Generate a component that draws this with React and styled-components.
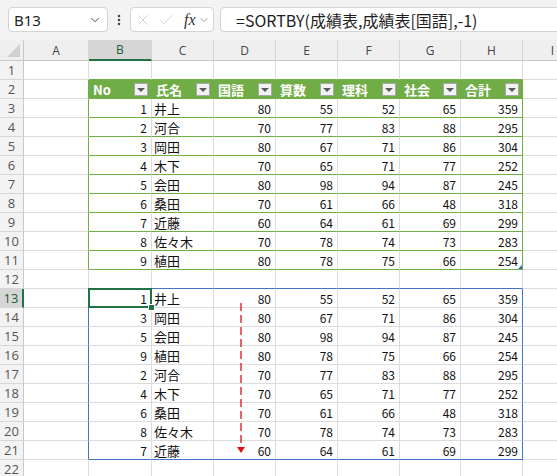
import React from 'react';
import styled, { createGlobalStyle, css } from 'styled-components';
import { ChevronDown, X, Check, EllipsisVertical } from 'lucide-react';

const GREEN = '#70ad47';
const GRID = '#dcdcdc';
const BLUE = '#4472c4';
const SEL = '#217346';

const Global = createGlobalStyle`
  html, body { margin: 0; padding: 0; background: #fff; overflow: hidden; }
  body { font-family: "Noto Sans CJK JP", "Noto Sans", sans-serif; }
`;

const Page = styled.div`
  width: 557px;
  height: 476px;
  overflow: hidden;
  display: flex;
  flex-direction: column;
`;

const FormulaBar = styled.div`
  height: 40px;
  flex: none;
  box-sizing: border-box;
  background: #f3f3f3;
  display: flex;
  align-items: flex-start;
  padding: 7px 0 0 8px;
`;

const NameBox = styled.div`
  width: 100px;
  height: 25px;
  flex: none;
  box-sizing: border-box;
  background: #fff;
  border: 1px solid #d4d4d4;
  border-radius: 4px;
  display: flex;
  align-items: center;
  justify-content: space-between;
  padding: 0 5px 0 5px;
  font-family: "Noto Sans", sans-serif;
  font-size: 15px;
  color: #1e1e1e;
`;

const Dots = styled.div`
  width: 22px;
  height: 25px;
  flex: none;
  display: flex;
  align-items: center;
  justify-content: center;
  color: #444;
`;

const FxBox = styled.div`
  width: 84px;
  height: 25px;
  flex: none;
  box-sizing: border-box;
  background: #fff;
  border: 1px solid #d4d4d4;
  border-radius: 4px;
  display: flex;
  align-items: center;
  padding: 0 2px 0 3px;
  gap: 5px;
  color: #c4c4c4;
`;

const FxLabel = styled.span`
  font-family: "Liberation Serif", serif;
  font-style: italic;
  font-size: 16px;
  color: #333;
  margin-left: 4px;
  margin-right: -3px;
`;

const FormulaInput = styled.div`
  flex: none;
  width: 360px;
  height: 25px;
  margin-left: 6px;
  box-sizing: border-box;
  background: #fff;
  border: 1px solid #d4d4d4;
  border-radius: 4px;
  display: flex;
  align-items: center;
  padding-left: 15px;
  font-size: 16px;
  color: #1e1e1e;
  white-space: nowrap;
`;

const Sheet = styled.div`
  position: relative;
  display: grid;
  grid-template-columns: 24px 65px 63px 62px 62px 62px 62px 61px 62px 60px;
  grid-template-rows: 21px;
  grid-auto-rows: 19px;
  width: 583px;
`;

const Corner = styled.div`
  position: relative;
  box-sizing: border-box;
  background: #efefef;
  border-right: 1px solid #c8c8c8;
  border-bottom: 1px solid #c8c8c8;
  &::after {
    content: '';
    position: absolute;
    right: 3px;
    bottom: 3px;
    border-left: 13px solid transparent;
    border-bottom: 13px solid #d0d0d0;
  }
`;

const ColHead = styled.div`
  box-sizing: border-box;
  display: flex;
  align-items: center;
  justify-content: center;
  background: ${p => (p.$sel ? '#d6d6d6' : '#efefef')};
  border-right: 1px solid #d6d6d6;
  border-bottom: ${p => (p.$sel ? `2px solid ${SEL}` : '1px solid #c8c8c8')};
  font-family: "Open Sans", sans-serif;
  font-size: 12px;
  color: ${p => (p.$sel ? '#1d5b3a' : '#444')};
`;

const RowHead = styled.div`
  box-sizing: border-box;
  display: flex;
  align-items: center;
  justify-content: center;
  background: ${p => (p.$sel ? '#d6d6d6' : '#f3f3f3')};
  border-right: ${p => (p.$sel ? `2px solid ${SEL}` : '1px solid #c8c8c8')};
  border-bottom: 1px solid #d6d6d6;
  font-family: "Open Sans", sans-serif;
  font-size: 13px;
  color: ${p => (p.$sel ? '#1d5b3a' : '#555')};
`;

const Cell = styled.div`
  position: relative;
  box-sizing: border-box;
  display: flex;
  align-items: center;
  justify-content: ${p => (p.$right ? 'flex-end' : 'flex-start')};
  padding: 0 4px 0 2px;
  border-right: 1px solid ${p => p.$br};
  border-bottom: 1px solid ${p => p.$bb};
  font-size: ${p => (p.$num ? '12px' : '13px')};
  color: #111;
  white-space: nowrap;
  ${p =>
    p.$selected &&
    css`
      &::after {
        content: '';
        position: absolute;
        left: -1px;
        top: -1px;
        right: -1px;
        bottom: -1px;
        border: 2px solid ${SEL};
        z-index: 2;
        pointer-events: none;
      }
      &::before {
        content: '';
        position: absolute;
        right: -4px;
        bottom: -4px;
        width: 5px;
        height: 5px;
        background: ${SEL};
        border: 1px solid #fff;
        z-index: 3;
      }
    `}
  ${p =>
    p.$resize &&
    css`
      &::after {
        content: '';
        position: absolute;
        right: 0;
        bottom: 0;
        border-left: 4px solid transparent;
        border-bottom: 4px solid #3a66b0;
      }
    `}
`;

const HeaderCell = styled.div`
  box-sizing: border-box;
  display: flex;
  align-items: center;
  justify-content: space-between;
  padding: 0 3px 0 4px;
  background: ${GREEN};
  border-right: 1px solid ${GREEN};
  border-bottom: 1px solid ${GREEN};
  color: #fff;
  font-weight: 700;
  font-size: 13px;
  white-space: nowrap;
`;

const FilterBtn = styled.span`
  width: 14px;
  height: 13px;
  box-sizing: border-box;
  flex: none;
  background: #f2f2f2;
  border: 1px solid #a8a8a8;
  display: flex;
  align-items: center;
  justify-content: center;
  &::before {
    content: '';
    border-left: 4px solid transparent;
    border-right: 4px solid transparent;
    border-top: 4px solid #595959;
    margin-top: 1px;
  }
`;

const ArrowLayer = styled.svg`
  position: absolute;
  left: 236px;
  top: 263px;
  overflow: visible;
  pointer-events: none;
`;

const COLS = ['A', 'B', 'C', 'D', 'E', 'F', 'G', 'H', 'I'];
const HEAD = ['No', '氏名', '国語', '算数', '理科', '社会', '合計'];

const T1 = [
  [1, '井上', 80, 55, 52, 65, 359],
  [2, '河合', 70, 77, 83, 88, 295],
  [3, '岡田', 80, 67, 71, 86, 304],
  [4, '木下', 70, 65, 71, 77, 252],
  [5, '会田', 80, 98, 94, 87, 245],
  [6, '桑田', 70, 61, 66, 48, 318],
  [7, '近藤', 60, 64, 61, 69, 299],
  [8, '佐々木', 70, 78, 74, 73, 283],
  [9, '植田', 80, 78, 75, 66, 254],
];
const T2 = [T1[0], T1[2], T1[4], T1[8], T1[1], T1[3], T1[5], T1[7], T1[6]];

function renderCell(r, ci) {
  const key = `${r}-${ci}`;
  const inCols = ci >= 1 && ci <= 7;
  const t1 = r >= 2 && r <= 11;
  const t2 = r >= 13 && r <= 21;

  if (r === 2 && inCols) {
    return (
      <HeaderCell key={key}>
        <span>{HEAD[ci - 1]}</span>
        <FilterBtn />
      </HeaderCell>
    );
  }

  let bb = GRID;
  let br = GRID;
  if (inCols && (t1 || r === 1)) bb = GREEN;
  if (inCols && (r === 12 || r === 21)) bb = BLUE;
  if ((ci === 0 || ci === 7) && t1) br = GREEN;
  if ((ci === 0 || ci === 7) && t2) br = BLUE;

  let content = null;
  let row = null;
  if (inCols && r >= 3 && r <= 11) row = T1[r - 3];
  if (inCols && t2) row = T2[r - 13];
  if (row) content = row[ci - 1];
  const isName = ci === 2;

  return (
    <Cell
      key={key}
      $bb={bb}
      $br={br}
      $right={!isName}
      $num={!isName}
      $selected={r === 13 && ci === 1}
      $resize={r === 11 && ci === 7}
    >
      {content}
    </Cell>
  );
}

export default function App() {
  const rows = [];
  for (let r = 1; r <= 22; r++) {
    rows.push(
      <RowHead key={`h${r}`} $sel={r === 13}>
        {r}
      </RowHead>
    );
    for (let ci = 0; ci < COLS.length; ci++) rows.push(renderCell(r, ci));
  }

  return (
    <Page>
      <Global />
      <FormulaBar>
        <NameBox>
          <span>B13</span>
          <ChevronDown size={14} strokeWidth={1.6} color="#444" />
        </NameBox>
        <Dots>
          <EllipsisVertical size={14} strokeWidth={2.4} />
        </Dots>
        <FxBox>
          <X size={18} strokeWidth={1} />
          <Check size={18} strokeWidth={1} />
          <FxLabel>fx</FxLabel>
          <ChevronDown size={12} strokeWidth={1.4} color="#777" />
        </FxBox>
        <FormulaInput>=SORTBY(成績表,成績表[国語],-1)</FormulaInput>
      </FormulaBar>
      <Sheet>
        <Corner />
        {COLS.map(c => (
          <ColHead key={c} $sel={c === 'B'}>
            {c}
          </ColHead>
        ))}
        {rows}
        <ArrowLayer width="10" height="152" viewBox="0 0 10 152">
          <line x1="5" y1="0" x2="5" y2="145" stroke="#e01010" strokeWidth="1.3" strokeDasharray="8 4" />
          <polygon points="1,144 9,144 5,150" fill="#e01010" />
        </ArrowLayer>
      </Sheet>
    </Page>
  );
}
